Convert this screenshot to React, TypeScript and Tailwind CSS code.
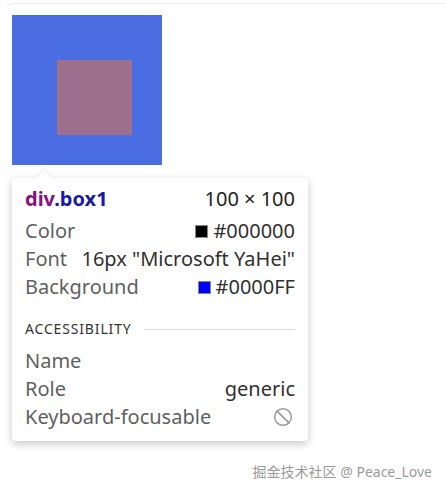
import React from 'react';
import { Ban } from 'lucide-react';

const font = { fontFamily: '"Noto Sans", "Open Sans", Arial, sans-serif' };

const Row: React.FC<{ label: string; children?: React.ReactNode; className?: string }> = ({ label, children, className = '' }) => (
  <div className={`h-[28px] flex items-center justify-between ${className}`}>
    <span className="text-[#5f5f5f]">{label}</span>
    <span className="flex items-center text-[#303030]">{children}</span>
  </div>
);

const App: React.FC = () => {
  return (
    <div className="w-[445px] h-[493px] bg-white relative overflow-hidden" style={font}>
      {/* faint card edge at the top */}
      <div className="ml-[4px] mt-[3px] h-[490px] border-t border-[#ececec] rounded-tl-[10px] flex flex-col">
        <div className="pl-[8px] pt-[11px]">
          <div className="w-[150px] h-[150px] bg-[#4a6ee2] pl-[45px] pt-[45px]">
            <div className="w-[75px] h-[75px] bg-[#9e6e8d]" />
          </div>

          {/* inspector tooltip */}
          <div className="relative mt-[13px] w-[296px] bg-white rounded-[4px] shadow-[0_3px_9px_rgba(0,0,0,0.22)] px-[13px] pt-[7px] pb-[10px] text-[20px] leading-none">
            <div className="absolute -top-[6px] left-[26px] w-[12px] h-[12px] bg-white rotate-45 shadow-[-1px_-1px_2px_rgba(0,0,0,0.08)]" />
            <div className="relative h-[28px] flex items-center justify-between">
              <span className="font-bold">
                <span className="text-[#881280]">div</span>
                <span className="text-[#1a1aa6]">.box1</span>
              </span>
              <span className="text-[#222]">100 × 100</span>
            </div>
            <Row label="Color" className="mt-[4px]">
              <span className="w-[13px] h-[13px] bg-black border border-[#888] mr-[5px]" />
              #000000
            </Row>
            <Row label="Font">16px "Microsoft YaHei"</Row>
            <Row label="Background">
              <span className="w-[13px] h-[13px] bg-[#0000ff] border border-[#888] mr-[5px]" />
              #0000FF
            </Row>

            <div className="mt-[14px] h-[28px] flex items-center gap-[12px]">
              <span className="text-[14px] tracking-[0.06em] text-[#333]">ACCESSIBILITY</span>
              <div className="flex-1 h-px bg-[#dcdcdc]" />
            </div>
            <Row label="Name" className="mt-[4px]" />
            <Row label="Role">generic</Row>
            <Row label="Keyboard-focusable">
              <Ban className="w-[20px] h-[20px] text-[#999] mr-[2px]" strokeWidth={1.8} />
            </Row>
          </div>
        </div>

        <div className="mt-auto mb-[11px] pr-[13px] text-right text-[14px] text-[#9a9a9a]" style={{ fontFamily: '"Noto Sans", "Noto Sans CJK SC", sans-serif' }}>
          掘金技术社区 @ Peace_Love
        </div>
      </div>
    </div>
  );
};

export default App;
